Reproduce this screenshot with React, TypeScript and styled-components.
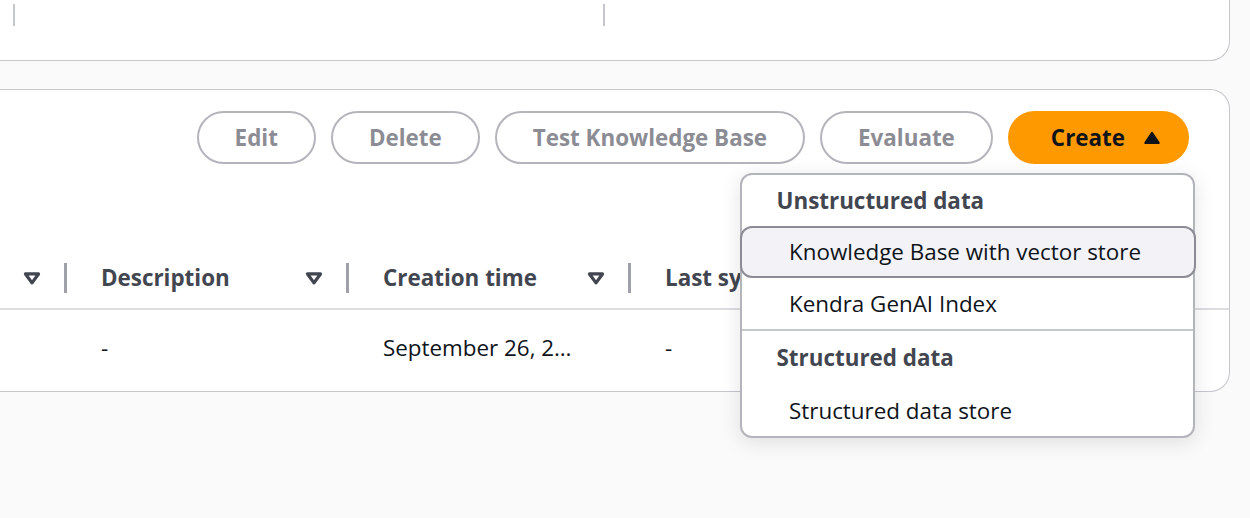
import * as React from 'react';
import styled, { createGlobalStyle, css } from 'styled-components';

const GlobalStyle = createGlobalStyle`
  * { box-sizing: border-box; }
  body {
    margin: 0;
    background: #fafafa;
    font-family: "Open Sans", "Noto Sans", sans-serif;
    font-size: 22.4px;
    line-height: 32px;
    color: #0f141a;
  }
`;

const Page = styled.div`
  min-height: 518px;
  padding-right: 20px;
  display: flex;
  flex-direction: column;
  gap: 28px;
`;

const Panel = styled.section<{ $cut?: boolean }>`
  background: #fff;
  border: 1.5px solid #c6c6cd;
  border-left: none;
  border-radius: 0 20px 20px 0;
  ${p =>
    p.$cut &&
    css`
      border-top: none;
      border-top-right-radius: 0;
    `}
`;

const TopRow = styled.div`
  height: 60px;
  display: flex;
  padding: 4px 0 0 13px;
`;

const TopCell = styled.div`
  width: 590px;
  height: 22px;
  border-left: 2px solid #c6c6cd;
`;

const Actions = styled.div`
  display: flex;
  justify-content: flex-end;
  gap: 15px;
  padding: 21px 40px 0 0;
`;

const Button = styled.button<{ $primary?: boolean }>`
  height: 53px;
  padding: 0 36px;
  display: inline-flex;
  align-items: center;
  gap: 14px;
  border-radius: 27px;
  border: 2.5px solid #b4b4bb;
  background: #fff;
  color: #8c8c94;
  font-family: inherit;
  font-size: 22.4px;
  font-weight: 700;
  white-space: nowrap;
  ${p =>
    p.$primary &&
    css`
      background: #ff9900;
      border-color: #ff9900;
      color: #0f141a;
      padding: 0 22px 0 41px;
    `}
`;

const MenuAnchor = styled.div`
  position: relative;
  display: flex;
`;

const Menu = styled.div`
  position: absolute;
  top: calc(100% + 9px);
  right: -6px;
  width: 455px;
  background: #fff;
  border: 2.5px solid #b4b4bb;
  border-radius: 12px;
  box-shadow: 0 4px 20px 1px rgba(0, 7, 22, 0.1);
  z-index: 5;
`;

const GroupLabel = styled.div<{ $h: number }>`
  height: ${p => p.$h}px;
  display: flex;
  align-items: center;
  padding-left: 34.5px;
  font-weight: 700;
  color: #424650;
`;

const MenuItem = styled.div<{ $h: number; $active?: boolean }>`
  height: ${p => p.$h}px;
  margin: 0 -2.5px;
  display: flex;
  align-items: center;
  padding-left: 47.5px;
  border: 2.5px solid transparent;
  border-radius: 12px;
  color: #0f141a;
  ${p =>
    p.$active &&
    css`
      border-color: #8c8c94;
      background: #f3f3f7;
    `}
`;

const MenuSeparator = styled.div`
  height: 2px;
  background: #c6c6cd;
`;

const Table = styled.div`
  margin-top: 84px;
`;

const HeadRow = styled.div`
  height: 62px;
  display: flex;
  align-items: center;
  border-bottom: 2px solid #dcdce1;
  font-weight: 700;
  color: #424650;
  white-space: nowrap;
  overflow: hidden;
`;

const BodyRow = styled.div`
  height: 81px;
  padding-bottom: 6px;
  display: flex;
  align-items: center;
  white-space: nowrap;
  overflow: hidden;
`;

const Cell = styled.div<{ $w: number }>`
  flex: 0 0 ${p => p.$w}px;
  display: flex;
  align-items: center;
  padding-left: ${p => (p.$w > 100 ? 34 : 0)}px;
`;

const Label = styled.span`
  flex: 1;
`;

const ColDivider = styled.span`
  width: 3px;
  height: 30px;
  margin-left: 19px;
  background: #a0a0a8;
`;

const Sort = () => (
  <svg width="26" height="26" viewBox="0 0 16 16" aria-hidden>
    <path
      d="M4 5.5h8l-4 5.5z"
      fill="none"
      stroke="#424650"
      strokeWidth="2"
      strokeLinejoin="round"
    />
  </svg>
);

const CaretUp = () => (
  <svg width="26" height="26" viewBox="0 0 16 16" aria-hidden>
    <path
      d="M4 11h8L8 5z"
      fill="#0f141a"
      stroke="#0f141a"
      strokeWidth="1.5"
      strokeLinejoin="round"
    />
  </svg>
);

const columns = ['Description', 'Creation time', 'Last sync time'];
const cells = ['-', 'September 26, 2…', '-'];

export default function App() {
  return (
    <>
      <GlobalStyle />
      <Page>
        <Panel $cut>
          <TopRow>
            <TopCell />
            <TopCell />
          </TopRow>
        </Panel>
        <Panel>
          <Actions>
            <Button disabled>Edit</Button>
            <Button disabled>Delete</Button>
            <Button disabled>Test Knowledge Base</Button>
            <Button disabled>Evaluate</Button>
            <MenuAnchor>
              <Button $primary>
                Create
                <CaretUp />
              </Button>
              <Menu role="menu">
                <GroupLabel $h={51}>Unstructured data</GroupLabel>
                <MenuItem $h={52} $active>
                  Knowledge Base with vector store
                </MenuItem>
                <MenuItem $h={51}>Kendra GenAI Index</MenuItem>
                <MenuSeparator />
                <GroupLabel $h={54}>Structured data</GroupLabel>
                <MenuItem $h={51}>Structured data store</MenuItem>
              </Menu>
            </MenuAnchor>
          </Actions>
          <Table>
            <HeadRow>
              <Cell $w={67}>
                <Label />
                <Sort />
                <ColDivider />
              </Cell>
              {columns.map(c => (
                <Cell key={c} $w={282}>
                  <Label>{c}</Label>
                  <Sort />
                  <ColDivider />
                </Cell>
              ))}
            </HeadRow>
            <BodyRow>
              <Cell $w={67} />
              {cells.map((c, i) => (
                <Cell key={i} $w={282}>
                  {c}
                </Cell>
              ))}
            </BodyRow>
          </Table>
        </Panel>
      </Page>
    </>
  );
}
